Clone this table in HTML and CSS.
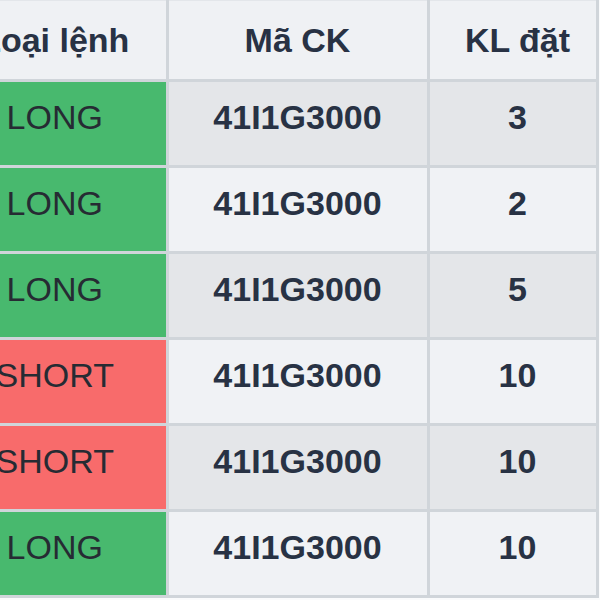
FILE: index.html
```html
<!DOCTYPE html>
<html lang="vi">
<head>
<meta charset="utf-8">
<link rel="stylesheet" href="styles.css">
</head>
<body>
<table class="orders">
  <thead>
    <tr><th class="c-type">Loại lệnh</th><th class="c-code">Mã CK</th><th class="c-qty">KL đặt</th></tr>
  </thead>
  <tbody>
    <tr><td class="c-type long">LONG</td><td class="c-code">41I1G3000</td><td class="c-qty">3</td></tr>
    <tr><td class="c-type long">LONG</td><td class="c-code">41I1G3000</td><td class="c-qty">2</td></tr>
    <tr><td class="c-type long">LONG</td><td class="c-code">41I1G3000</td><td class="c-qty">5</td></tr>
    <tr><td class="c-type short">SHORT</td><td class="c-code">41I1G3000</td><td class="c-qty">10</td></tr>
    <tr><td class="c-type short">SHORT</td><td class="c-code">41I1G3000</td><td class="c-qty">10</td></tr>
    <tr><td class="c-type long">LONG</td><td class="c-code">41I1G3000</td><td class="c-qty">10</td></tr>
  </tbody>
</table>
</body>
</html>
```
FILE: styles.css
```css
html, body {
  margin: 0;
  padding: 0;
  background: #fafbfc;
  overflow: hidden;
  width: 600px;
  height: 600px;
}
.orders {
  margin-left: -56px;
  border-collapse: collapse;
  table-layout: fixed;
  font-family: "Liberation Sans", Arial, sans-serif;
  font-size: 34px;
  line-height: 34px;
  color: #283244;
}
.orders th, .orders td {
  border: 3px solid #d0d5da;
  text-align: center;
  box-sizing: border-box;
  white-space: nowrap;
  padding: 18px 0 31px;
}
.orders thead tr th {
  border-top: 1px solid #e3e6ea;
  border-left: none;
  background: #eff1f4;
  font-weight: 700;
  padding: 22px 0 22px;
  height: 80px;
}
.orders td {
  font-weight: 700;
  height: 85.5px;
}
.orders tbody tr:nth-child(odd) td { background: #e4e6e9; }
.orders tbody tr:nth-child(even) td { background: #f0f2f5; }
.orders tbody tr td.c-type {
  font-weight: 400;
  color: #262b33;
  border-left: none;
}
.orders tbody tr td.long { background: #48b96e; }
.orders tbody tr td.short { background: #f86b6b; }
.c-type { width: 223px; }
.c-code { width: 261px; }
.c-qty { width: 169px; padding-left: 10px !important; }
```
